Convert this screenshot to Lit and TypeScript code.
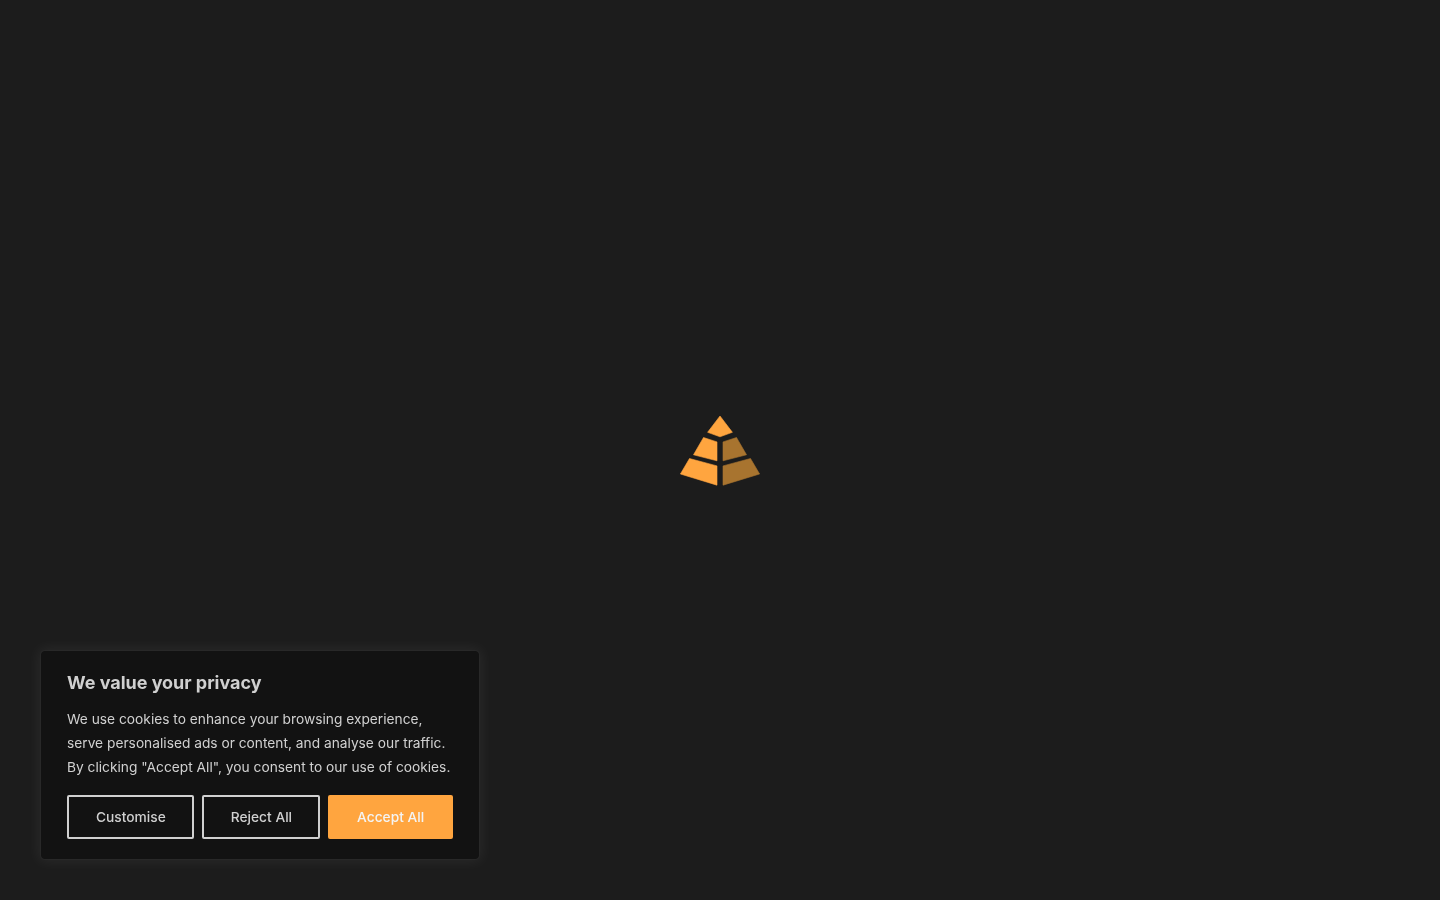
import { LitElement, html, css } from "lit";
import { customElement } from "lit/decorators.js";

@customElement("app-root")
export class AppRoot extends LitElement {
  static styles = css`
    :host {
      display: block;
      font-family: Inter, "Liberation Sans", sans-serif;
    }
    .page {
      width: 100%;
      height: 100vh;
      background: #1c1c1c;
      display: flex;
      align-items: center;
      justify-content: center;
      overflow: hidden;
    }
    .logo {
      display: block;
      width: 80px;
      height: 72px;
      margin-top: 2px;
    }
    .lit { fill: #ffa53f; stroke: #ffa53f; stroke-width: 0.6; stroke-linejoin: round; }
    .dim { fill: #a8742f; stroke: #a8742f; stroke-width: 0.6; stroke-linejoin: round; }
    .banner {
      position: fixed;
      left: 41px;
      bottom: 41px;
      width: 438px;
      height: 208px;
      box-sizing: border-box;
      padding: 21px 25px 20px 26px;
      background: #121212;
      border-radius: 4px;
      box-shadow: 0 0 14px 3px rgba(255, 255, 255, 0.06), 0 0 2px rgba(255, 255, 255, 0.1);
      color: #d0d0d0;
    }
    .title {
      margin: 0 0 14px;
      font-size: 18px;
      line-height: 21px;
      font-weight: 700;
      color: #d0d0d0;
      letter-spacing: -0.03px;
    }
    .body {
      margin: 0 0 16px;
      font-size: 13.75px;
      line-height: 24px;
      font-weight: 400;
      white-space: nowrap;
    }
    .actions {
      display: flex;
      gap: 8px;
    }
    .btn {
      height: 44px;
      box-sizing: border-box;
      padding: 0 26px 0 27px;
      border: 2px solid #d0d0d0;
      border-radius: 2px;
      background: transparent;
      color: #d0d0d0;
      white-space: nowrap;
      font: 500 13.75px/24px Inter, "Liberation Sans", sans-serif;
    }
    .accept {
      padding: 0 27px;
      background: #ffa53f;
      border-color: #ffa53f;
      color: #f4f4f4;
    }
  `;

  render() {
    return html`
      <div class="page">
        <svg class="logo" viewBox="680 415 80 72" aria-label="Logo">
          <polygon class="lit" points="720,416 732.4,432.3 720,436.8 707.6,432.3" />
          <polygon class="lit" points="703.5,437.5 717,441.9 717,460.8 693.5,454.8" />
          <polygon class="dim" points="736.5,437.5 723,441.9 723,460.8 746.5,454.8" />
          <polygon class="lit" points="689.5,458.5 717,465.9 717,485.2 680.4,474" />
          <polygon class="dim" points="750.5,458.5 723,465.9 723,485.2 759.6,474" />
        </svg>
      </div>
      <div class="banner">
        <p class="title">We value your privacy</p>
        <p class="body">We use cookies to enhance your browsing experience,<br />serve personalised ads or content, and analyse our traffic.<br />By clicking "Accept All", you consent to our use of cookies.</p>
        <div class="actions">
          <button class="btn">Customise</button>
          <button class="btn">Reject All</button>
          <button class="btn accept">Accept All</button>
        </div>
      </div>
    `;
  }
}
